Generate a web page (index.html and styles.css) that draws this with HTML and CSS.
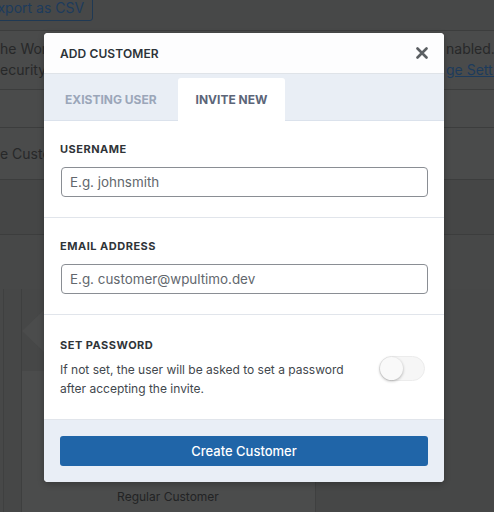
FILE: index.html
```html
<!DOCTYPE html>
<html lang="en">
<head>
<meta charset="utf-8">
<title>Add Customer</title>
<link rel="stylesheet" href="styles.css">
</head>
<body>
<div class="page">
  <div class="topbar">
    <span class="export-btn">Export as CSV</span>
  </div>
  <div class="notice">
    <div class="notice-line">
      <span class="cell-left">he WordPress</span>
      <span class="cell-mid"></span>
      <span class="cell-right">nabled. We recommend</span>
    </div>
    <div class="notice-line">
      <span class="cell-left">ecurity, and</span>
      <span class="cell-mid"></span>
      <span class="cell-right"><a class="bg-link">ge Settings</a></span>
    </div>
  </div>
  <div class="row row-empty"></div>
  <div class="row row-search"><span class="cell-left">e Customers</span></div>
  <div class="row row-filters"></div>
  <div class="grid-area">
    <div class="gutter gutter-a"></div>
    <div class="gutter gutter-b"></div>
    <div class="card">
      <div class="card-top"><div class="card-arrow"></div></div>
      <div class="card-body">
        <div class="card-name">Regular Customer</div>
      </div>
    </div>
    <div class="rest"></div>
  </div>
</div>

<div class="modal">
  <div class="modal-header">
    <span class="modal-title">ADD CUSTOMER</span>
    <svg class="close" width="12" height="12" viewBox="0 0 12 12"><path d="M1.5 1.5 L10.5 10.5 M10.5 1.5 L1.5 10.5" stroke="#5b5f63" stroke-width="2.6" stroke-linecap="round"/></svg>
  </div>
  <div class="tabs">
    <div class="tab">EXISTING USER</div>
    <div class="tab tab-active">INVITE NEW</div>
  </div>
  <div class="section">
    <div class="label">USERNAME</div>
    <div class="input">E.g. johnsmith</div>
  </div>
  <div class="section">
    <div class="label">EMAIL ADDRESS</div>
    <div class="input">E.g. customer@wpultimo.dev</div>
  </div>
  <div class="section section-toggle">
    <div class="toggle-text">
      <div class="label">SET PASSWORD</div>
      <div class="desc">If not set, the user will be asked to set a password after accepting the invite.</div>
    </div>
    <div class="toggle"><div class="knob"></div></div>
  </div>
  <div class="footer">
    <div class="button">Create Customer</div>
  </div>
</div>
</body>
</html>
```

FILE: styles.css
```css
* { box-sizing: border-box; }
html, body { margin: 0; padding: 0; }
body {
  width: 494px;
  height: 512px;
  overflow: hidden;
  background: #474848;
  font-family: "Inter", "Liberation Sans", sans-serif;
  position: relative;
}
.page {
  display: flex;
  flex-direction: column;
  height: 512px;
  color: #272829;
  font-size: 13px;
}
.topbar {
  height: 31px;
  border-bottom: 1px solid #3c3d3d;
  flex: none;
}
.export-btn {
  display: inline-block;
  margin-left: -22px;
  margin-top: -9px;
  height: 26px;
  line-height: 24px;
  padding: 0 8px 0 10px;
  border: 1px solid #1f3954;
  border-radius: 3px;
  color: #1d3b5c;
  font-size: 14px;
}
.notice {
  height: 59px;
  flex: none;
  padding-top: 7px;
  border-bottom: 1px solid #3c3d3d;
  background: #4a4b4b;
}
.notice-line {
  display: grid;
  grid-template-columns: 44px 400px 1fr;
  line-height: 21px;
  font-size: 14px;
  white-space: nowrap;
}
.cell-left, .cell-right { overflow: hidden; display: block; }
.cell-right { padding-left: 2px; }
.bg-link { color: #1d3b5c; text-decoration: underline; }
.row { flex: none; border-bottom: 1px solid #3c3d3d; }
.row-empty { height: 38px; background: #4a4b4b; }
.row-search {
  height: 52px;
  background: #4a4b4b;
  display: flex;
  align-items: center;
  font-size: 14px;
  white-space: nowrap;
  overflow: hidden;
}
.row-search .cell-left { width: 44px; }
.row-filters { height: 55px; background: #454646; }
.grid-area {
  flex: 1;
  display: grid;
  grid-template-columns: 4px 18px 294px 1fr;
  padding-top: 54px;
}
.gutter-a { border-right: 1px solid #3f4040; }
.gutter-b { border-right: 1px solid #3e3f3f; background: #464747; }
.card {
  border-right: 1px solid #3f4040;
  display: flex;
  flex-direction: column;
}
.card-top {
  height: 82px;
  background: #464747;
  position: relative;
}
.card-arrow {
  position: absolute;
  left: 0;
  top: 21px;
  width: 0;
  height: 0;
  border-top: 21px solid transparent;
  border-bottom: 21px solid transparent;
  border-right: 22px solid #4b4c4c;
}
.card-body {
  flex: 1;
  background: #4b4c4c;
  display: flex;
  flex-direction: column;
  justify-content: flex-end;
  align-items: center;
  padding-bottom: 8px;
}
.card-name {
  font-size: 12px;
  color: #222324;
  margin-right: 1px;
}
.rest { background: #464747; }

/* modal */
.modal {
  position: absolute;
  left: 44px;
  top: 33px;
  width: 400px;
  background: #fff;
  border-radius: 4px;
  box-shadow: 0 2px 6px rgba(0,0,0,0.25);
  overflow: hidden;
}
.modal-header {
  height: 41px;
  padding: 0 16px;
  display: flex;
  align-items: center;
  justify-content: space-between;
  border-bottom: 1px solid #dfe3e8;
  background: #fdfdfe;
}
.modal-title {
  font-size: 12px;
  font-weight: 600;
  color: #2c3338;
  letter-spacing: 0.1px;
}
.close { margin-right: 0; }
.tabs {
  display: flex;
  gap: 3px;
  padding: 4px 3px 0;
  height: 47px;
  background: #e9eef5;
  border-bottom: 1px solid #dbe2ec;
}
.tab {
  padding: 0 18px;
  display: flex;
  align-items: center;
  font-size: 12px;
  font-weight: 700;
  color: #9ba6b9;
  height: 42px;
  border-radius: 3px 3px 0 0;
}
.tab-active {
  background: #fff;
  color: #5b6578;
  height: 43px;
  margin-bottom: -1px;
}
.section {
  padding: 20px 16px 20px;
  border-bottom: 1px solid #e1e5eb;
}
.label {
  font-size: 11px;
  line-height: 16px;
  font-weight: 700;
  color: #2f3438;
  letter-spacing: 0.5px;
}
.input {
  margin-top: 10px;
  margin-left: 1px;
  height: 30px;
  border: 1px solid #8a8e94;
  border-radius: 4px;
  padding: 0 8px;
  display: flex;
  align-items: center;
  font-size: 13.4px;
  color: #62676d;
}
.section-toggle {
  display: flex;
  align-items: center;
  justify-content: space-between;
  padding-top: 22px;
  padding-bottom: 21px;
}
.toggle-text { width: 300px; }
.desc {
  margin-top: 7px;
  font-size: 12px;
  line-height: 19px;
  color: #42474d;
}
.toggle {
  width: 46px;
  height: 25px;
  border-radius: 13px;
  background: #f6f6f6;
  border: 1px solid #ececec;
  margin-right: 3px;
  margin-top: 1px;
  position: relative;
}
.knob {
  position: absolute;
  left: 0;
  top: 0;
  width: 23px;
  height: 23px;
  border-radius: 50%;
  background: #f9f9f9;
  box-shadow: 0 1px 3px rgba(0,0,0,0.3);
}
.footer {
  background: #e9eef6;
  padding: 16px;
}
.button {
  height: 30px;
  background: #2065a8;
  border-radius: 3px;
  color: #fff;
  font-size: 13px;
  font-weight: 500;
  display: flex;
  align-items: center;
  justify-content: center;
}
```
